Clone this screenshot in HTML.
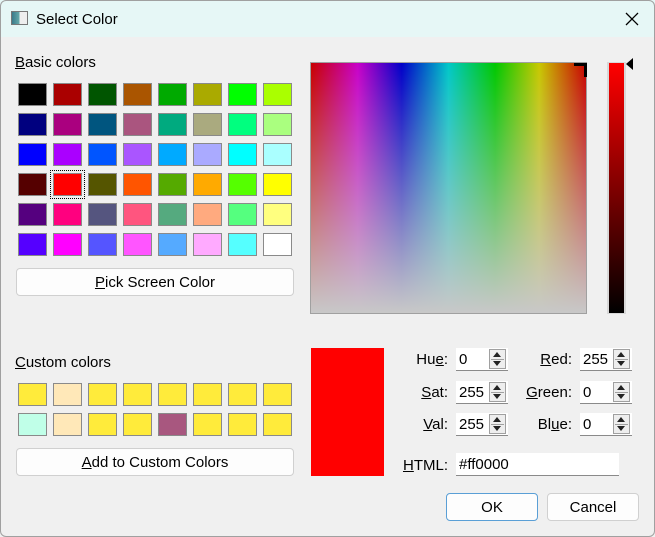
<!DOCTYPE html>
<html><head><style>
*{margin:0;padding:0;box-sizing:border-box}
body{width:655px;height:537px;background:#f0f0f0;font-family:"Liberation Sans",sans-serif;font-size:15px;color:#000;position:relative;overflow:hidden}
.a{position:absolute}
.c{position:absolute;width:29px;height:23px;border:1px solid #8a8a8a}
.btn{position:absolute;background:#fdfdfd;border:1px solid #d0d0d0;border-radius:4px;text-align:center;font-size:15px;line-height:27px}
.sp{position:absolute;height:23px;background:#fff;border-bottom:1px solid #8a8a8a;font-size:15px;line-height:24px;padding-left:3px}
.ar{position:absolute;right:2px;top:1px;width:17px;height:20px;border:1px solid #a0a0a0;background:#eee}
.ar:before{content:"";position:absolute;left:3px;top:2px;border:4.5px solid transparent;border-bottom:5px solid #222;border-top:0}
.ar:after{content:"";position:absolute;left:3px;bottom:2px;border:4.5px solid transparent;border-top:5px solid #222;border-bottom:0}
.ar i{position:absolute;left:1px;right:1px;top:9px;height:1px;background:#a0a0a0}
.lb{position:absolute;font-size:15px;text-align:right;line-height:24px}
u{text-decoration:underline}
</style></head><body>
<div class="a" style="left:0;top:0;width:655px;height:37px;background:#e6f7f6"></div>
<div class="a" style="top:11px;left:11px;width:17px;height:14px;border:1px solid #777;background:linear-gradient(90deg,#3a7a8a 0,#6aa 50%,#eee 50%)"></div>
<div class="a" style="left:36px;top:11px;font-size:15px">Select Color</div>
<svg class="a" style="left:625px;top:12px" width="14" height="14"><path d="M1 1L13 13M13 1L1 13" stroke="#000" stroke-width="1.3"/></svg>
<div class="a" style="left:0;top:0;width:655px;height:537px;border:1px solid #a0a0a0;border-radius:6px"></div>

<div class="a" style="left:15px;top:54px"><u>B</u>asic colors</div>
<div id="g"></div>
<div class="a" style="left:50px;top:170px;width:35px;height:29px;border:1px dotted #000"></div>
<div class="btn" style="left:16px;top:268px;width:278px;height:28px"><u>P</u>ick Screen Color</div>

<div class="a" style="left:15px;top:354px"><u>C</u>ustom colors</div>
<div class="btn" style="left:16px;top:448px;width:278px;height:28px"><u>A</u>dd to Custom Colors</div>

<div class="a" style="left:310px;top:62px;width:277px;height:252px;border:1px solid #a0a0a0;background:linear-gradient(180deg,rgba(200,200,200,0),#c8c8c8),linear-gradient(90deg,#c80000,#c800c8 17%,#0000c8 33%,#00c8c8 50%,#00c800 67%,#c8c800 83%,#c80000)"></div>
<div class="a" style="left:574px;top:63px;width:12px;height:3px;background:#000"></div>
<div class="a" style="left:584px;top:63px;width:3px;height:14px;background:#000"></div>
<div class="a" style="left:607px;top:62px;width:19px;height:252px;border:1px solid #d8d8d8;border-left-width:2px;border-right-width:2px;background:linear-gradient(#ff0000,#000)"></div>
<div class="a" style="left:626px;top:58px;border:6px solid transparent;border-right:7px solid #000;border-left:0"></div>

<div class="a" style="left:311px;top:348px;width:73px;height:128px;background:#ff0000"></div>

<div class="lb" style="left:400px;top:348px;width:48px">Hu<u>e</u>:</div>
<div class="sp" style="left:456px;top:348px;width:52px">0<div class="ar"><i></i></div></div>
<div class="lb" style="left:400px;top:381px;width:48px"><u>S</u>at:</div>
<div class="sp" style="left:456px;top:381px;width:52px">255<div class="ar"><i></i></div></div>
<div class="lb" style="left:400px;top:413px;width:48px"><u>V</u>al:</div>
<div class="sp" style="left:456px;top:413px;width:52px">255<div class="ar"><i></i></div></div>
<div class="lb" style="left:510px;top:348px;width:62px"><u>R</u>ed:</div>
<div class="sp" style="left:580px;top:348px;width:52px">255<div class="ar"><i></i></div></div>
<div class="lb" style="left:510px;top:381px;width:62px"><u>G</u>reen:</div>
<div class="sp" style="left:580px;top:381px;width:52px">0<div class="ar"><i></i></div></div>
<div class="lb" style="left:510px;top:413px;width:62px">Bl<u>u</u>e:</div>
<div class="sp" style="left:580px;top:413px;width:52px">0<div class="ar"><i></i></div></div>
<div class="lb" style="left:390px;top:454px;width:58px"><u>H</u>TML:</div>
<div class="sp" style="left:456px;top:453px;width:163px;padding-left:3px">#ff0000</div>

<div class="btn" style="left:446px;top:493px;width:92px;height:28px;border:1px solid #5a9fd6;line-height:27px">OK</div>
<div class="btn" style="left:547px;top:493px;width:92px;height:28px;line-height:27px">Cancel</div>

<script>
var b=[["#000000","#aa0000","#005500","#aa5500","#00aa00","#aaaa00","#00ff00","#aaff00"],
["#00007f","#aa007f","#00557f","#aa557f","#00aa7f","#aaaa7f","#00ff7f","#aaff7f"],
["#0000ff","#aa00ff","#0055ff","#aa55ff","#00aaff","#aaaaff","#00ffff","#aaffff"],
["#550000","#ff0000","#555500","#ff5500","#55aa00","#ffaa00","#55ff00","#ffff00"],
["#55007f","#ff007f","#55557f","#ff557f","#55aa7f","#ffaa7f","#55ff7f","#ffff7f"],
["#5500ff","#ff00ff","#5555ff","#ff55ff","#55aaff","#ffaaff","#55ffff","#ffffff"]];
var y="#ffeb3b",cc=[[y,"#ffe8b8",y,y,y,y,y,y],["#c0ffe8","#ffe8b8",y,y,"#a8577f",y,y,y]];
var h="";
b.forEach(function(r,i){r.forEach(function(c,j){h+='<div class="c" style="left:'+(18+35*j)+'px;top:'+(83+30*i)+'px;background:'+c+'"></div>'})});
cc.forEach(function(r,i){r.forEach(function(c,j){h+='<div class="c" style="left:'+(18+35*j)+'px;top:'+(383+30*i)+'px;background:'+c+'"></div>'})});
document.getElementById("g").innerHTML=h;
</script>
</body></html>
